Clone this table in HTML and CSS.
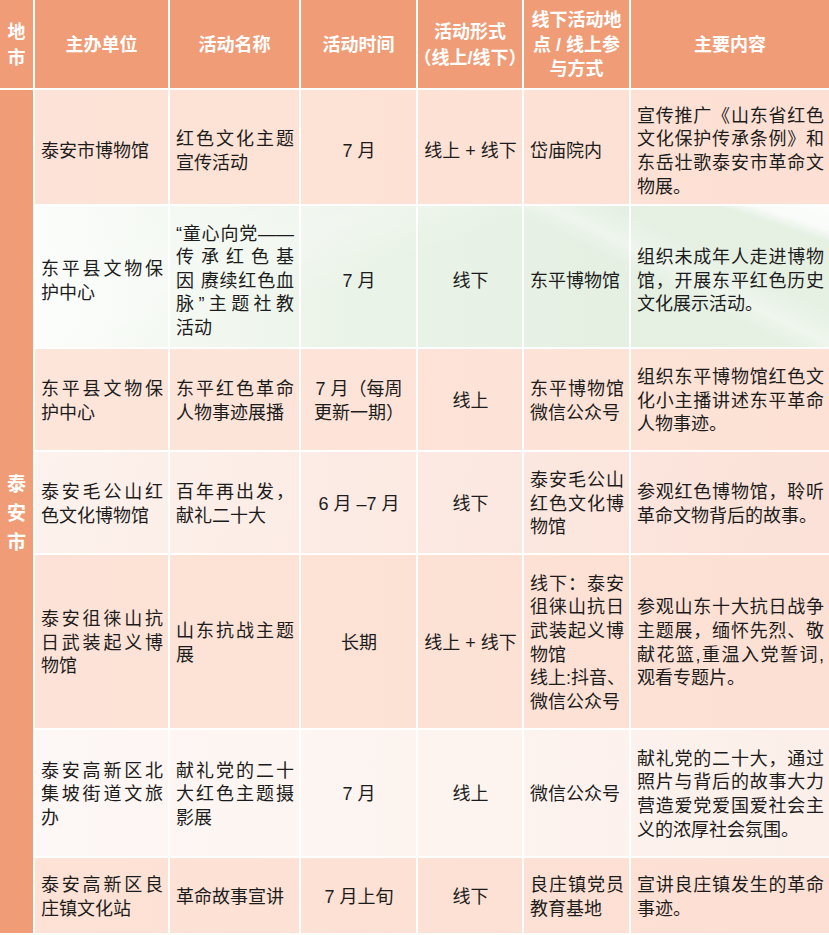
FILE: index.html
```html
<!DOCTYPE html>
<html lang="zh-CN">
<head>
<meta charset="utf-8">
<title>泰安市红色文化活动</title>
<link rel="stylesheet" href="styles.css">
</head>
<body>
<div class="sheet">
  <div class="head">
    <div class="hc h1">地<br>市</div>
    <div class="hc h2">主办单位</div>
    <div class="hc h3">活动名称</div>
    <div class="hc h4">活动时间</div>
    <div class="hc h5"><span>活动形式<br><span class="halt">（线上/线下）</span></span></div>
    <div class="hc h6 three"><span>线下活动地<br>点 / 线上参<br>与方式</span></div>
    <div class="hc h7">主要内容</div>
  </div>
  <div class="body">
    <div class="city">泰<br>安<br>市</div>
    <div class="rows">
      <div class="row r1 low">
        <div class="cell c2"><p>泰安市博物馆</p></div>
        <div class="cell c3"><p>红色文化主题宣传活动</p></div>
        <div class="cell c4 mid"><p>7 月</p></div>
        <div class="cell c5 mid"><p>线上 + 线下</p></div>
        <div class="cell c6"><p>岱庙院内</p></div>
        <div class="cell c7"><p>宣传推广《山东省红色文化保护传承条例》和东岳壮歌泰安市革命文物展。</p></div>
      </div>
      <div class="row r2 low">
        <div class="cell c2"><p>东平县文物保护中心</p></div>
        <div class="cell c3"><p><span class="jl">“童心向党——</span><span class="jl">传承红色基</span><span class="jl">因 赓续红色血</span><span class="jl">脉”主题社教</span><span class="ln">活动</span></p></div>
        <div class="cell c4 mid"><p>7 月</p></div>
        <div class="cell c5 mid"><p>线下</p></div>
        <div class="cell c6"><p>东平博物馆</p></div>
        <div class="cell c7"><p>组织未成年人走进博物馆，开展东平红色历史文化展示活动。</p></div>
      </div>
      <div class="row r3">
        <div class="cell c2"><p>东平县文物保护中心</p></div>
        <div class="cell c3"><p>东平红色革命人物事迹展播</p></div>
        <div class="cell c4 mid"><p>7 月（每周<br>更新一期）</p></div>
        <div class="cell c5 mid"><p>线上</p></div>
        <div class="cell c6"><p>东平博物馆微信公众号</p></div>
        <div class="cell c7"><p>组织东平博物馆红色文化小主播讲述东平革命人物事迹。</p></div>
      </div>
      <div class="row r4">
        <div class="cell c2"><p>泰安毛公山红色文化博物馆</p></div>
        <div class="cell c3"><p>百年再出发，献礼二十大</p></div>
        <div class="cell c4 mid"><p>6 月 –7 月</p></div>
        <div class="cell c5 mid"><p>线下</p></div>
        <div class="cell c6"><p>泰安毛公山红色文化博物馆</p></div>
        <div class="cell c7"><p>参观红色博物馆，聆听革命文物背后的故事。</p></div>
      </div>
      <div class="row r5">
        <div class="cell c2"><p>泰安徂徕山抗日武装起义博物馆</p></div>
        <div class="cell c3"><p>山东抗战主题展</p></div>
        <div class="cell c4 mid"><p>长期</p></div>
        <div class="cell c5 mid"><p>线上 + 线下</p></div>
        <div class="cell c6"><p>线下：泰安徂徕山抗日武装起义博物馆<br><span class="nw">线上:抖音、</span>微信公众号</p></div>
        <div class="cell c7"><p>参观山东十大抗日战争主题展，缅怀先烈、敬献花篮,重温入党誓词,观看专题片。</p></div>
      </div>
      <div class="row r6">
        <div class="cell c2"><p>泰安高新区北集坡街道文旅办</p></div>
        <div class="cell c3"><p>献礼党的二十大红色主题摄影展</p></div>
        <div class="cell c4 mid"><p>7 月</p></div>
        <div class="cell c5 mid"><p>线上</p></div>
        <div class="cell c6"><p>微信公众号</p></div>
        <div class="cell c7"><p>献礼党的二十大，通过照片与背后的故事大力营造爱党爱国爱社会主义的浓厚社会氛围。</p></div>
      </div>
      <div class="row r7">
        <div class="cell c2"><p>泰安高新区良庄镇文化站</p></div>
        <div class="cell c3"><p>革命故事宣讲</p></div>
        <div class="cell c4 mid"><p>7 月上旬</p></div>
        <div class="cell c5 mid"><p>线下</p></div>
        <div class="cell c6"><p>良庄镇党员教育基地</p></div>
        <div class="cell c7"><p>宣讲良庄镇发生的革命事迹。</p></div>
      </div>
    </div>
  </div>
</div>
</body>
</html>
```

FILE: styles.css
```css
html, body {
  margin: 0;
  padding: 0;
  background: #ffffff;
}

body {
  font-family: "Liberation Sans", "Noto Sans CJK SC", sans-serif;
  color: #1c1c1c;
}

.sheet {
  width: 829px;
  display: flex;
  flex-direction: column;
  gap: 2px;
}

.head {
  display: flex;
  gap: 2px;
  height: 88px;
}

.hc {
  background: #f09c77;
  color: #ffffff;
  font-weight: bold;
  font-size: 18px;
  line-height: 26px;
  display: flex;
  align-items: center;
  justify-content: center;
  text-align: center;
  padding-top: 2px;
  box-sizing: border-box;
}

.hc.three {
  line-height: 24.5px;
}

.h1 { width: 33px; }
.h2 { width: 133px; }
.h3 { width: 129px; }
.h4 { width: 115px; }
.h5 { width: 104px; }
.h6 { width: 105px; }
.h7 { width: 198px; }

.halt {
  font-feature-settings: "halt";
  white-space: nowrap;
}

.body {
  display: flex;
  gap: 2px;
}

.city {
  width: 33px;
  background: #f09c76;
  color: #ffffff;
  font-weight: bold;
  font-size: 19px;
  line-height: 29px;
  display: flex;
  align-items: center;
  justify-content: center;
  text-align: center;
  padding-top: 4px;
  box-sizing: border-box;
}

.rows {
  width: 794px;
  display: flex;
  flex-direction: column;
  gap: 2px;
}

.row {
  display: flex;
}

.r1 { height: 114px; background: linear-gradient(90deg, #fde3d7 0%, #fde0d3 100%); }
.r2 {
  height: 141px;
  background:
    linear-gradient(18deg, rgba(255,255,255,0) 0%, rgba(255,255,255,0) 91%, rgba(255,255,255,0.75) 94%, rgba(255,255,255,0.9) 100%),
    linear-gradient(26deg, rgba(255,255,255,0) 0%, rgba(255,255,255,0) 70%, rgba(255,255,255,0.35) 74%, rgba(255,255,255,0) 80%),
    linear-gradient(160deg, rgba(255,255,255,0) 0%, rgba(255,255,255,0.25) 30%, rgba(255,255,255,0) 45%),
    linear-gradient(90deg, #fbfdfb 0%, #f3f8f1 18%, #eaf3e8 42%, #e5f0e3 70%, #e6f1e4 100%);
}
.r3 { height: 101px; background: linear-gradient(90deg, #fde5da 0%, #fde1d5 100%); }
.r4 { height: 101px; background: linear-gradient(100deg, #fdf2ed 0%, #fcebe4 40%, #fbe1d7 100%); }
.r5 { height: 173px; background: linear-gradient(90deg, #fde3d7 0%, #fde0d4 100%); }
.r6 { height: 126px; background: linear-gradient(90deg, #fdf7f5 0%, #fdf4f0 50%, #fcefe9 100%); }
.r7 { height: 75px; background: linear-gradient(90deg, #fde2d5 0%, #fde0d3 100%); }

.cell {
  box-sizing: border-box;
  display: flex;
  align-items: center;
  padding: 4px 5px 0 6px;
  font-size: 18px;
  line-height: 23.6px;
  text-align: justify;
}

.low .cell {
  padding-top: 10px;
}

.cell + .cell {
  border-left: 2px solid #ffffff;
}

.cell p {
  margin: 0;
  width: 100%;
}

.c2 { width: 133px; }
.c3 { width: 131px; }
.c4 { width: 117px; }
.c5 { width: 106px; }
.c6 { width: 107px; }
.c7 { width: 200px; }

.mid {
  justify-content: center;
  text-align: center;
}

.jl {
  display: block;
  text-align: justify;
  text-align-last: justify;
}

.ln {
  display: block;
}

.nw {
  white-space: nowrap;
}
```
